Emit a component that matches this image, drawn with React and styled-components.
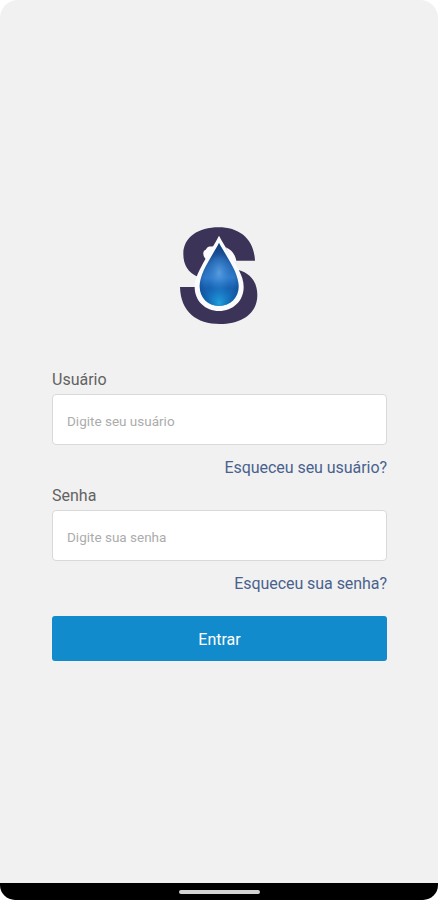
import React from 'react';
import styled, { createGlobalStyle } from 'styled-components';

const GlobalStyle = createGlobalStyle`
  * {
    box-sizing: border-box;
  }
  body {
    margin: 0;
    background: #fff;
    font-family: Roboto, "Liberation Sans", sans-serif;
  }
`

const Screen = styled.div`
  display: flex;
  flex-direction: column;
  height: 900px;
  overflow: hidden;
  background: #f1f1f1;
  border-radius: 18px 18px 0 0;
`

const Content = styled.main`
  flex: 1;
  display: flex;
  flex-direction: column;
  align-items: center;
  padding: 226px 51px 0 52px;
`

const Logo = styled.svg`
  display: block;
  width: 80px;
  height: 98px;
  margin-right: 1px;
`

const Form = styled.form`
  display: flex;
  flex-direction: column;
  width: 100%;
  margin-top: 46px;
`

const Field = styled.div`
  display: flex;
  flex-direction: column;
  height: 116px;
`

const Label = styled.label`
  height: 24px;
  font-size: 16px;
  line-height: 20px;
  color: #626262;
`

const Input = styled.input`
  width: 100%;
  height: 51px;
  padding: 2px 14px 0;
  border: 1px solid #d9d9d9;
  border-radius: 4px;
  background: #fff;
  outline: none;
  font-family: inherit;
  font-size: 13.5px;
  color: #626262;
  &::placeholder {
    color: #acacac;
    opacity: 1;
  }
`

const Forgot = styled.a`
  align-self: flex-end;
  margin-top: 13px;
  font-size: 16px;
  line-height: 20px;
  letter-spacing: -0.05px;
  color: #49628d;
  text-decoration: none;
`

const Button = styled.button`
  height: 45px;
  margin-top: 14px;
  padding: 2px 0 0;
  border: 0;
  border-radius: 3px;
  background: #118bcb;
  font-family: inherit;
  font-size: 16px;
  color: #fff;
`

const NavBar = styled.div`
  background: #fff;
`

const NavInner = styled.div`
  display: flex;
  justify-content: center;
  height: 17px;
  padding-top: 7px;
  background: #000;
  border-radius: 0 0 15px 15px;
`

const Handle = styled.div`
  width: 81px;
  height: 4px;
  border-radius: 2px;
  background: #d4d4d4;
`

const dropPath = 'M162 84C145 118 104 171 104 214C104 249 129 273 162 273C196 273 221 249 221 214C221 171 180 118 162 84Z';

function DropLogo() {
  return (
    <Logo viewBox="42 33 240 294" aria-hidden="true">
      <defs>
        <linearGradient id="drop" x1="0" y1="0" x2="0" y2="1">
          <stop offset="0" stopColor="#123f80" />
          <stop offset="0.3" stopColor="#2463ae" />
          <stop offset="0.55" stopColor="#2f7bcb" />
          <stop offset="0.72" stopColor="#1860b0" />
          <stop offset="1" stopColor="#1274c0" />
        </linearGradient>
        <radialGradient id="shine" cx="0.5" cy="0.47" r="0.32">
          <stop offset="0" stopColor="#6aaeea" stopOpacity="0.7" />
          <stop offset="1" stopColor="#3a8add" stopOpacity="0" />
        </radialGradient>
        <radialGradient id="glow" cx="0.5" cy="0.96" r="0.38">
          <stop offset="0" stopColor="#27a9e2" stopOpacity="0.85" />
          <stop offset="1" stopColor="#1279c6" stopOpacity="0" />
        </radialGradient>
        <radialGradient id="edge" cx="0.5" cy="0.6" r="0.55">
          <stop offset="0.65" stopColor="#0b3a78" stopOpacity="0" />
          <stop offset="1" stopColor="#0b3a78" stopOpacity="0.45" />
        </radialGradient>
      </defs>
      {/* letter S */}
      <path fill="#3b3458" d="M270 137H206L125 148L98 185C70 174 55 150 55 117C55 66 101 37 161 37C224 37 267 72 270 137Z" />
      <path fill="#3b3458" d="M45 216H110L220 165C256 174 277 201 277 241C277 295 230 327 165 327C94 327 47 290 45 216Z" />
      {/* light opening and outline around the drop */}
      <path fill="#fbfbfd" d="M147 93C140 96 136 94 131 95C124 97 125 104 119 106C112 112 115 123 120 130L126 136ZM182 97C198 103 211 118 214 138L204 140Z" />
      <path fill="#fbfbfd" d="M162 62C147 91 122 128 104 164C94 184 89 199 89 216C89 259 122 288 162 288C203 288 236 259 236 216C236 198 230 181 220 162C202 127 179 94 162 62Z" />
      <path fill="url(#drop)" d={dropPath} />
      <path fill="url(#shine)" d={dropPath} />
      <path fill="url(#glow)" d={dropPath} />
      <path fill="url(#edge)" d={dropPath} />
    </Logo>
  );
}

function App() {
  return (
    <>
      <GlobalStyle />
      <Screen>
        <Content>
          <DropLogo />
          <Form>
            <Field>
              <Label htmlFor="user">Usuário</Label>
              <Input id="user" placeholder="Digite seu usuário" />
              <Forgot href="#">Esqueceu seu usuário?</Forgot>
            </Field>
            <Field>
              <Label htmlFor="password">Senha</Label>
              <Input id="password" type="password" placeholder="Digite sua senha" />
              <Forgot href="#">Esqueceu sua senha?</Forgot>
            </Field>
            <Button type="button">Entrar</Button>
          </Form>
        </Content>
        <NavBar>
          <NavInner>
            <Handle />
          </NavInner>
        </NavBar>
      </Screen>
    </>
  );
}

export default App;
